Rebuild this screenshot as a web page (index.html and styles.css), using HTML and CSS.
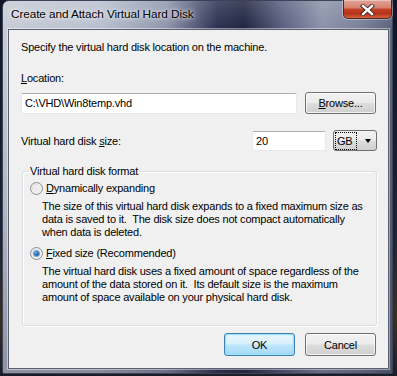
FILE: index.html
```html
<!DOCTYPE html>
<html>
<head>
<meta charset="utf-8">
<link rel="stylesheet" href="styles.css">
</head>
<body>
<div class="window">
  <div class="titlebar">
    <span class="title">Create and Attach Virtual Hard Disk</span>
    <div class="close">
      <svg width="17" height="12" viewBox="0 0 17 12">
        <path d="M4 2 L13 10 M13 2 L4 10" stroke="#3a2020" stroke-width="4.2" stroke-linecap="square" fill="none"/>
        <path d="M4 2 L13 10 M13 2 L4 10" stroke="#ffffff" stroke-width="2.4" stroke-linecap="square" fill="none"/>
      </svg>
    </div>
  </div>
  <div class="client">
    <p class="intro">Specify the virtual hard disk location on the machine.</p>
    <div class="loc-label"><u>L</u>ocation:</div>
    <div class="loc-row">
      <div class="textbox path">C:\VHD\Win8temp.vhd</div>
      <div class="button browse"><span><u>B</u>rowse...</span></div>
    </div>
    <div class="size-row">
      <span class="size-label">Virtual hard disk <u>s</u>ize:</span>
      <div class="textbox size">20</div>
      <div class="combo"><span class="focus">GB</span><span class="arrow"></span></div>
    </div>
    <fieldset class="group">
      <legend>Virtual hard disk format</legend>
      <div class="radio-row first"><span class="radio"></span><span><u>D</u>ynamically expanding</span></div>
      <p class="desc">The size of this virtual hard disk expands to a fixed maximum size as<br>data is saved to it.&nbsp; The disk size does not compact automatically<br>when data is deleted.</p>
      <div class="radio-row second"><span class="radio checked"><span class="dot"></span></span><span><u>F</u>ixed size (Recommended)</span></div>
      <p class="desc">The virtual hard disk uses a fixed amount of space regardless of the<br>amount of the data stored on it.&nbsp; Its default size is the maximum<br>amount of space available on your physical hard disk.</p>
    </fieldset>
    <div class="buttons">
      <div class="button ok"><span>OK</span></div>
      <div class="button cancel"><span>Cancel</span></div>
    </div>
  </div>
</div>
</body>
</html>
```

FILE: styles.css
```css
html, body {
  margin: 0;
  padding: 0;
}
body {
  width: 397px;
  height: 376px;
  overflow: hidden;
  background: linear-gradient(to bottom, #101626 0%, #1a2236 60%, #3a3020 85%, #1a1c28 100%);
  font-family: "Liberation Sans", Arial, sans-serif;
  font-size: 11px;
  letter-spacing: -0.2px;
  color: #000;
}
.window {
  margin-left: 2px;
  width: 391px;
  height: 374px;
  border-radius: 7px 7px 2px 2px;
  box-sizing: border-box;
  border: 1px solid #3c4258;
  background:
    linear-gradient(to bottom, rgba(255,255,255,0.15) 0px, rgba(255,255,255,0) 28px, rgba(0,0,0,0.1) 200px, rgba(40,40,60,0.35) 100%),
    linear-gradient(to right, #c7ccd6 0%, #b9c0ce 25%, #8e96ad 42%, #2c3152 55%, #20243f 62%, #5a6080 72%, #8c92aa 82%, #7a8098 92%, #5c627c 100%);
  display: flex;
  flex-direction: column;
}
.titlebar {
  height: 28px;
  display: flex;
  align-items: flex-start;
  flex: none;
}
.title {
  margin-left: 8px;
  margin-top: 6px;
  font-size: 11.8px;
  letter-spacing: -0.1px;
  line-height: 14px;
  color: #000;
  text-shadow: 0 0 6px rgba(255,255,255,0.9), 0 0 3px rgba(255,255,255,0.8);
}
.close {
  margin-left: auto;
  margin-right: 0px;
  margin-top: -1px;
  width: 49px;
  height: 19px;
  box-sizing: border-box;
  border: 1px solid #4a2a2a;
  border-top: none;
  border-radius: 0 0 5px 5px;
  box-shadow: 0 0 0 1px rgba(255,255,255,0.35), inset 0 1px 0 rgba(255,255,255,0.35);
  background: linear-gradient(to bottom, #e3a396 0%, #d6806e 45%, #c2412a 50%, #b5321a 75%, #d8603c 100%);
  display: flex;
  align-items: center;
  justify-content: center;
}
.close svg {
  display: block;
  margin-top: 1px;
}
.client {
  flex: none;
  margin: 0 3px 0 5px;
  height: 340px;
  box-sizing: border-box;
  border: 1px solid #5a6072;
  box-shadow: 0 0 0 1px rgba(255,255,255,0.45);
  background: #f0f0f0;
  padding: 9px 11px 0 12px;
  display: flex;
  flex-direction: column;
  white-space: nowrap;
}
.intro {
  margin: 0;
  line-height: 16px;
}
.loc-label {
  margin-top: 15px;
  line-height: 16px;
}
u {
  text-decoration: underline;
  text-underline-offset: 1px;
}
.loc-row {
  margin-top: 6px;
  display: flex;
  align-items: center;
}
.textbox {
  box-sizing: border-box;
  height: 21px;
  background: #fff;
  border: 1px solid #e3e9ef;
  border-top-color: #abadb3;
  border-radius: 2px;
  padding-left: 3px;
  display: flex;
  align-items: center;
  line-height: 14px;
}
.path {
  width: 276px;
}
.button {
  box-sizing: border-box;
  height: 22px;
  border: 1px solid #707070;
  border-radius: 3px;
  background: linear-gradient(to bottom, #f2f2f2 0%, #ebebeb 48%, #dddddd 52%, #cfcfcf 100%);
  box-shadow: inset 0 0 0 1px rgba(255,255,255,0.7);
  display: flex;
  align-items: center;
  justify-content: center;
  line-height: 14px;
}
.browse {
  margin-left: 8px;
  width: 71px;
}
.size-row {
  margin-top: 16px;
  display: flex;
  align-items: center;
  height: 21px;
}
.size {
  margin-left: auto;
  width: 74px;
  height: 20px;
}
.combo {
  margin-left: 7px;
  width: 44px;
  height: 21px;
  box-sizing: border-box;
  border: 1px solid #707070;
  border-radius: 3px;
  background: linear-gradient(to bottom, #f2f2f2 0%, #ebebeb 48%, #dddddd 52%, #cfcfcf 100%);
  display: flex;
  align-items: center;
  padding-left: 2px;
}
.focus {
  outline: 1px dotted #000;
  outline-offset: 0;
  padding: 1px 3px 1px 1px;
  line-height: 14px;
}
.arrow {
  margin-left: 9px;
  width: 0;
  height: 0;
  border-left: 3.5px solid transparent;
  border-right: 3.5px solid transparent;
  border-top: 4px solid #000;
  margin-top: 1px;
}
.group {
  margin: 13px 0 0 1px;
  width: 355px;
  box-sizing: border-box;
  padding: 0 0 21px 0;
  border: 1px solid #d5dfe5;
  border-radius: 3px;
  box-shadow: inset 1px 1px 0 #fff, 1px 1px 0 #fff;
  min-width: 0;
}
.group legend {
  margin-left: 5px;
  padding: 0 2px;
  line-height: 15px;
}
.radio-row {
  display: flex;
  align-items: center;
  height: 16px;
  margin-left: 7px;
  line-height: 14px;
}
.radio-row.first {
  margin-top: 1px;
}
.radio-row.second {
  margin-top: 6px;
}
.radio {
  width: 13px;
  height: 13px;
  box-sizing: border-box;
  border-radius: 50%;
  border: 1px solid #8a8f96;
  background: radial-gradient(circle at 50% 60%, #e6e6e6 0%, #f4f4f4 60%, #ffffff 100%);
  box-shadow: inset 0 0 0 1px #f0f0f0, inset 1px 1px 2px rgba(0,0,0,0.15);
  margin-right: 3px;
  display: flex;
  align-items: center;
  justify-content: center;
}
.dot {
  width: 5px;
  height: 5px;
  border-radius: 50%;
  background: radial-gradient(circle at 40% 35%, #6ab0e8 0%, #2a6cb0 50%, #0d3a6c 100%);
  box-shadow: 0 0 0 1px #7aa8d0;
}
.desc {
  margin: 4px 0 0 19px;
  line-height: 13px;
}
.buttons {
  margin-top: 7px;
  display: flex;
  justify-content: flex-end;
  gap: 10px;
  margin-right: 1px;
}
.buttons .button {
  width: 71px;
  height: 23px;
}
.ok {
  border-color: #3c7fb1;
  background: linear-gradient(to bottom, #eaf6fd 0%, #d9f0fc 48%, #bee6fd 52%, #a7d9f5 100%);
  box-shadow: inset 0 0 0 1px #9ee3fb, inset 0 0 2px 1px rgba(80,200,255,0.35);
}
```
